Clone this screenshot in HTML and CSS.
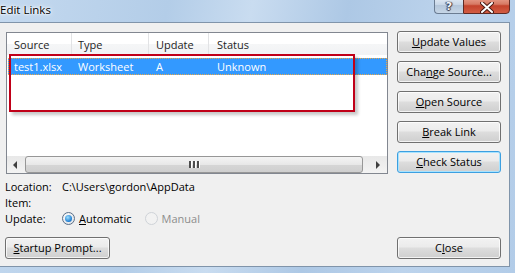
FILE: index.html
```html
<!DOCTYPE html>
<html>
<head>
<meta charset="utf-8">
<link rel="stylesheet" href="styles.css">
</head>
<body>
<div class="window">
  <div class="titlebar">
    <span class="title">Edit Links</span>
    <div class="caption-btns">
      <div class="cb help"><span>?</span></div>
      <div class="cb close">
        <svg width="14" height="11" viewBox="0 0 14 11"><path d="M2 1 L12 10 M12 1 L2 10" stroke="#4a1a14" stroke-width="4" stroke-linecap="round"/><path d="M2 1 L12 10 M12 1 L2 10" stroke="#fff" stroke-width="2" stroke-linecap="round"/></svg>
      </div>
    </div>
  </div>
  <div class="client">
    <div class="top">
      <div class="listview">
        <div class="lv-head">
          <div class="col c1">Source</div>
          <div class="col c2">Type</div>
          <div class="col c3">Update</div>
          <div class="col c4 last">Status</div>
        </div>
        <div class="lv-body">
          <div class="lv-row selected">
            <div class="cell c1">test1.xlsx</div>
            <div class="cell c2">Worksheet</div>
            <div class="cell c3">A</div>
            <div class="cell c4">Unknown</div>
          </div>
        </div>
        <div class="hscroll">
          <div class="sb-arrow"><svg width="5" height="8" viewBox="0 0 5 8"><path d="M4 0 L0 4 L4 8 Z" fill="#404040"/></svg></div>
          <div class="sb-thumb"><span class="grip"><i></i><i></i><i></i></span></div>
          <div class="sb-arrow right"><svg width="5" height="8" viewBox="0 0 5 8"><path d="M1 0 L5 4 L1 8 Z" fill="#404040"/></svg></div>
        </div>
        <div class="callout"></div>
      </div>
      <div class="actions">
        <button class="btn"><u>U</u>pdate Values</button>
        <button class="btn">Cha<u>n</u>ge Source...</button>
        <button class="btn"><u>O</u>pen Source</button>
        <button class="btn"><u>B</u>reak Link</button>
        <button class="btn default"><u>C</u>heck Status</button>
      </div>
    </div>
    <div class="info">
      <div class="info-row"><span class="lbl">Location:</span><span class="val">C:\Users\gordon\AppData</span></div>
      <div class="info-row"><span class="lbl">Item:</span><span class="val"></span></div>
      <div class="info-row">
        <span class="lbl">Update:</span>
        <span class="radio checked"><span class="dot"></span></span><span class="rlabel"><u>A</u>utomatic</span>
        <span class="radio disabled"></span><span class="rlabel disabled">Manual</span>
      </div>
    </div>
    <div class="bottom">
      <button class="btn startup"><u>S</u>tartup Prompt...</button>
      <button class="btn">C<u>l</u>ose</button>
    </div>
  </div>
</div>
</body>
</html>
```

FILE: styles.css
```css
* { box-sizing: border-box; }
html, body { margin: 0; padding: 0; }
body {
  width: 515px;
  height: 273px;
  overflow: hidden;
  font-family: "Open Sans", "Noto Sans", sans-serif;
  font-size: 11px;
  color: #000;
  background: linear-gradient(100deg, #c4d9ef 0%, #b3cde8 30%, #c9dcf0 45%, #adc8e5 62%, #bcd3ec 80%, #b2cce8 100%);
}
.window {
  width: 515px;
  height: 273px;
  display: flex;
  flex-direction: column;
}
.titlebar {
  height: 22px;
  display: flex;
  align-items: flex-start;
  justify-content: space-between;
  padding-right: 5px;
}
.title {
  font-size: 11.5px;
  line-height: 19px;
  text-shadow: 0 0 6px #fff, 0 0 3px #fff, 0 0 2px #fff;
}
.caption-btns {
  display: flex;
  margin-top: -4px;
}
.cb {
  height: 18px;
  display: flex;
  align-items: center;
  justify-content: center;
  padding-top: 4px;
}
.help {
  width: 29px;
  border: 1px solid #6b7d93;
  border-right: none;
  border-radius: 0 0 0 4px;
  background: linear-gradient(#e6eef7, #c7d6e7 50%, #b4c6da 51%, #c6d6e7);
}
.help span {
  font-family: "DejaVu Sans", sans-serif;
  font-weight: bold;
  font-size: 11px;
  color: #f4f7fb;
  text-shadow: 0 0 1px #334, 1px 0 1px #334, -1px 0 1px #334, 0 1px 1px #334;
  line-height: 12px;
}
.close {
  width: 47px;
  border: 1px solid #5e2a24;
  border-radius: 0 0 4px 0;
  background: linear-gradient(#eba593, #d77a64 45%, #c4432c 55%, #d35c43);
}
.client {
  width: 510px;
  height: 245px;
  background: #f0f0f0;
  border-top: 1px solid #8094aa;
  border-right: 1px solid #8094aa;
  border-bottom: 1px solid #8094aa;
  padding: 9px 8px 0 5px;
  display: flex;
  flex-direction: column;
}
.top {
  display: flex;
  gap: 9px;
}
.listview {
  position: relative;
  margin-left: 1px;
  width: 383px;
  height: 142px;
  border: 1px solid #828790;
  background: #fff;
  display: flex;
  flex-direction: column;
}
.lv-head {
  height: 22px;
  display: flex;
  background: linear-gradient(#ffffff 0%, #ffffff 50%, #f5f6f7 51%, #f1f2f4 100%);
}
.col {
  line-height: 19px;
  padding-top: 2px;
  border-right: 1px solid #e2e3e5;
  padding-left: 7px;
  color: #1e1e1e;
}
.col.last { border-right: none; }
.c1 { width: 65px; }
.c2 { width: 77px; padding-left: 6px; }
.c3 { width: 60px; }
.c4 { width: 100px; padding-left: 8px; }
.lv-body {
  flex: 1;
  padding: 3px 0 0 1px;
}
.lv-row {
  display: flex;
  height: 17px;
  width: 379px;
}
.lv-row.selected {
  background: #3399ff;
  color: #fff;
  outline: 1px dotted #e8a848;
  outline-offset: -1px;
}
.cell {
  line-height: 18px;
  padding-left: 6px;
}
.cell.c1 { width: 64px; }
.cell.c2 { width: 77px; padding-left: 6px; }
.cell.c3 { width: 60px; padding-left: 7px; }
.cell.c4 { padding-left: 8px; }
.hscroll {
  height: 17px;
  display: flex;
  align-items: stretch;
  background: linear-gradient(#e8e8e8, #f3f3f3);
}
.sb-arrow {
  width: 17px;
  display: flex;
  align-items: center;
  justify-content: center;
}
.sb-arrow.right { margin-left: auto; width: 19px; }
.sb-thumb {
  width: 338px;
  margin-left: 1px;
  border: 1px solid #979797;
  border-radius: 3px;
  background: linear-gradient(#f4f4f4, #e8e8e8 50%, #d6d6d6 51%, #cfcfcf);
  display: flex;
  align-items: center;
  justify-content: center;
}
.grip { display: flex; gap: 1px; }
.grip i {
  display: block;
  width: 3px;
  height: 7px;
  background: #4d4d4d;
  border-right: 1px solid #fff;
}
.callout {
  position: absolute;
  left: 2px;
  top: 21px;
  width: 346px;
  height: 58px;
  border: 2px solid #c00018;
  box-shadow: 3px 3px 3px rgba(0, 0, 0, 0.22);
}
.actions {
  display: flex;
  flex-direction: column;
  gap: 8px;
  margin-top: -1px;
}
.btn {
  width: 104px;
  height: 22px;
  padding: 0;
  font-family: "Open Sans", "Noto Sans", sans-serif;
  font-size: 11px;
  color: #000;
  border: 1px solid #707070;
  border-radius: 3px;
  background: linear-gradient(#f2f2f2 0%, #ebebeb 45%, #dddddd 50%, #cfcfcf 100%);
  box-shadow: inset 0 0 0 1px rgba(255, 255, 255, 0.75);
  line-height: 18px;
}
.btn.default {
  border-color: #3c9fe0;
  box-shadow: inset 0 0 0 1px #a7e3ff;
}
.info {
  margin-top: 4px;
}
.info-row {
  display: flex;
  align-items: center;
  height: 16px;
}
.lbl { width: 57px; }
.radio {
  width: 13px;
  height: 13px;
  border-radius: 50%;
  border: 1px solid #5a6f88;
  background: radial-gradient(circle at 40% 35%, #ffffff, #d8dde3);
  display: flex;
  align-items: center;
  justify-content: center;
  margin-right: 4px;
}
.radio .dot {
  width: 7px;
  height: 7px;
  border-radius: 50%;
  background: radial-gradient(circle at 40% 35%, #9de0ff, #1b7ad0 70%, #0f4f8f);
}
.radio.disabled {
  border-color: #cfd3d8;
  background: #f2f2f2;
}
.rlabel { margin-right: 13px; }
.rlabel.disabled { color: #8d8d8d; }
.bottom {
  display: flex;
  justify-content: space-between;
  margin-top: 11px;
}
.btn.startup { width: 105px; }
```
